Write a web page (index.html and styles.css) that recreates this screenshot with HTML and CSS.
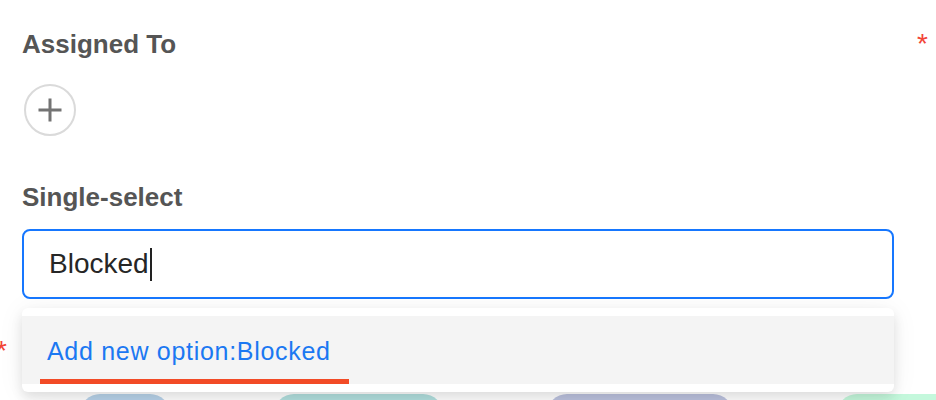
FILE: index.html
```html
<!DOCTYPE html>
<html lang="en">
<head>
  <meta charset="UTF-8">
  <meta name="viewport" content="width=device-width, initial-scale=1.0">
  <title>Task Fields</title>
  <link rel="stylesheet" href="styles.css">
</head>
<body>
  <div class="form">
    <div class="label-row">
      <span class="field-label">Assigned To</span>
      <span class="required">*</span>
    </div>
    <button class="add-user" type="button" aria-label="Add assignee">
      <svg width="24" height="24" viewBox="0 0 24 24">
        <path d="M12 0.5v23M0.5 12h23" stroke="#737373" stroke-width="3" fill="none"/>
      </svg>
    </button>

    <div class="label-row second">
      <span class="field-label">Single-select</span>
    </div>
    <div class="select">
      <div class="select-input">
        <span class="select-value">Blocked</span><span class="caret"></span>
      </div>
      <div class="dropdown">
        <div class="option">Add new option:Blocked</div>
        <div class="option-mark"></div>
      </div>
    </div>

    <div class="status-field">
      <div class="status-label"><span class="required">*</span></div>
      <div class="pills">
        <span class="pill pill-blue"></span>
        <span class="pill pill-teal"></span>
        <span class="pill pill-purple"></span>
        <span class="pill pill-green"></span>
      </div>
    </div>
  </div>
</body>
</html>
```

FILE: styles.css
```css
body {
  margin: 0;
  padding: 0;
  font-family: 'Liberation Sans', Arial, sans-serif;
  background-color: #fff;
  color: #333;
  overflow: hidden;
}

.form {
  padding: 29px 42px 0 22px;
}

.label-row {
  display: flex;
  justify-content: space-between;
  align-items: baseline;
  margin-right: -34px;
  height: 30px;
  line-height: 30px;
}

.label-row.second {
  margin-top: 46px;
}

.field-label {
  font-size: 26px;
  font-weight: 700;
  color: #555;
}

.required {
  font-size: 28px;
  color: #f24437;
}

.add-user {
  display: flex;
  align-items: center;
  justify-content: center;
  width: 52px;
  height: 52px;
  margin: 25px 0 0 2px;
  padding: 0;
  border: 2px solid #dadada;
  border-radius: 50%;
  background: #fff;
}

/* select with open dropdown */
.select {
  position: relative;
  margin-top: 17px;
}

.select-input {
  display: flex;
  align-items: center;
  height: 70px;
  box-sizing: border-box;
  padding-left: 25px;
  border: 2px solid #1677ff;
  border-radius: 8px;
}

.select-value {
  font-size: 28px;
  color: #262626;
}

.caret {
  width: 2px;
  height: 33px;
  margin-left: 1px;
  background: #222;
}

.dropdown {
  position: absolute;
  top: calc(100% + 9px);
  left: 0;
  right: 0;
  z-index: 2;
  padding: 8px 0;
  background: #fff;
  border-radius: 6px;
  box-shadow: 0 6px 12px rgba(0, 0, 0, 0.1), 0 2px 28px rgba(0, 0, 0, 0.06);
}

.option {
  height: 68px;
  box-sizing: border-box;
  padding: 1px 0 0 25px;
  line-height: 68px;
  font-size: 25px;
  letter-spacing: 0.7px;
  color: #1b78f2;
  background: #f4f4f4;
}

.option-mark {
  position: absolute;
  left: 18px;
  bottom: 8px;
  width: 309px;
  height: 5px;
  background: #f24b26;
}

/* field underneath the dropdown */
.status-field {
  margin-top: 36px;
}

.status-label {
  margin-left: -26px;
  height: 32px;
  line-height: 32px;
}

.pills {
  display: flex;
  gap: 104px;
  margin: 27px 0 0 58px;
}

.pill {
  height: 40px;
  border-radius: 20px;
  flex-shrink: 0;
}

.pill-blue {
  width: 90px;
  background: #b8d3ea;
}

.pill-teal {
  width: 169px;
  background: #b2e0df;
}

.pill-purple {
  width: 186px;
  background: #bcc2df;
}

.pill-green {
  width: 120px;
  background: #c4f8dc;
}
```
